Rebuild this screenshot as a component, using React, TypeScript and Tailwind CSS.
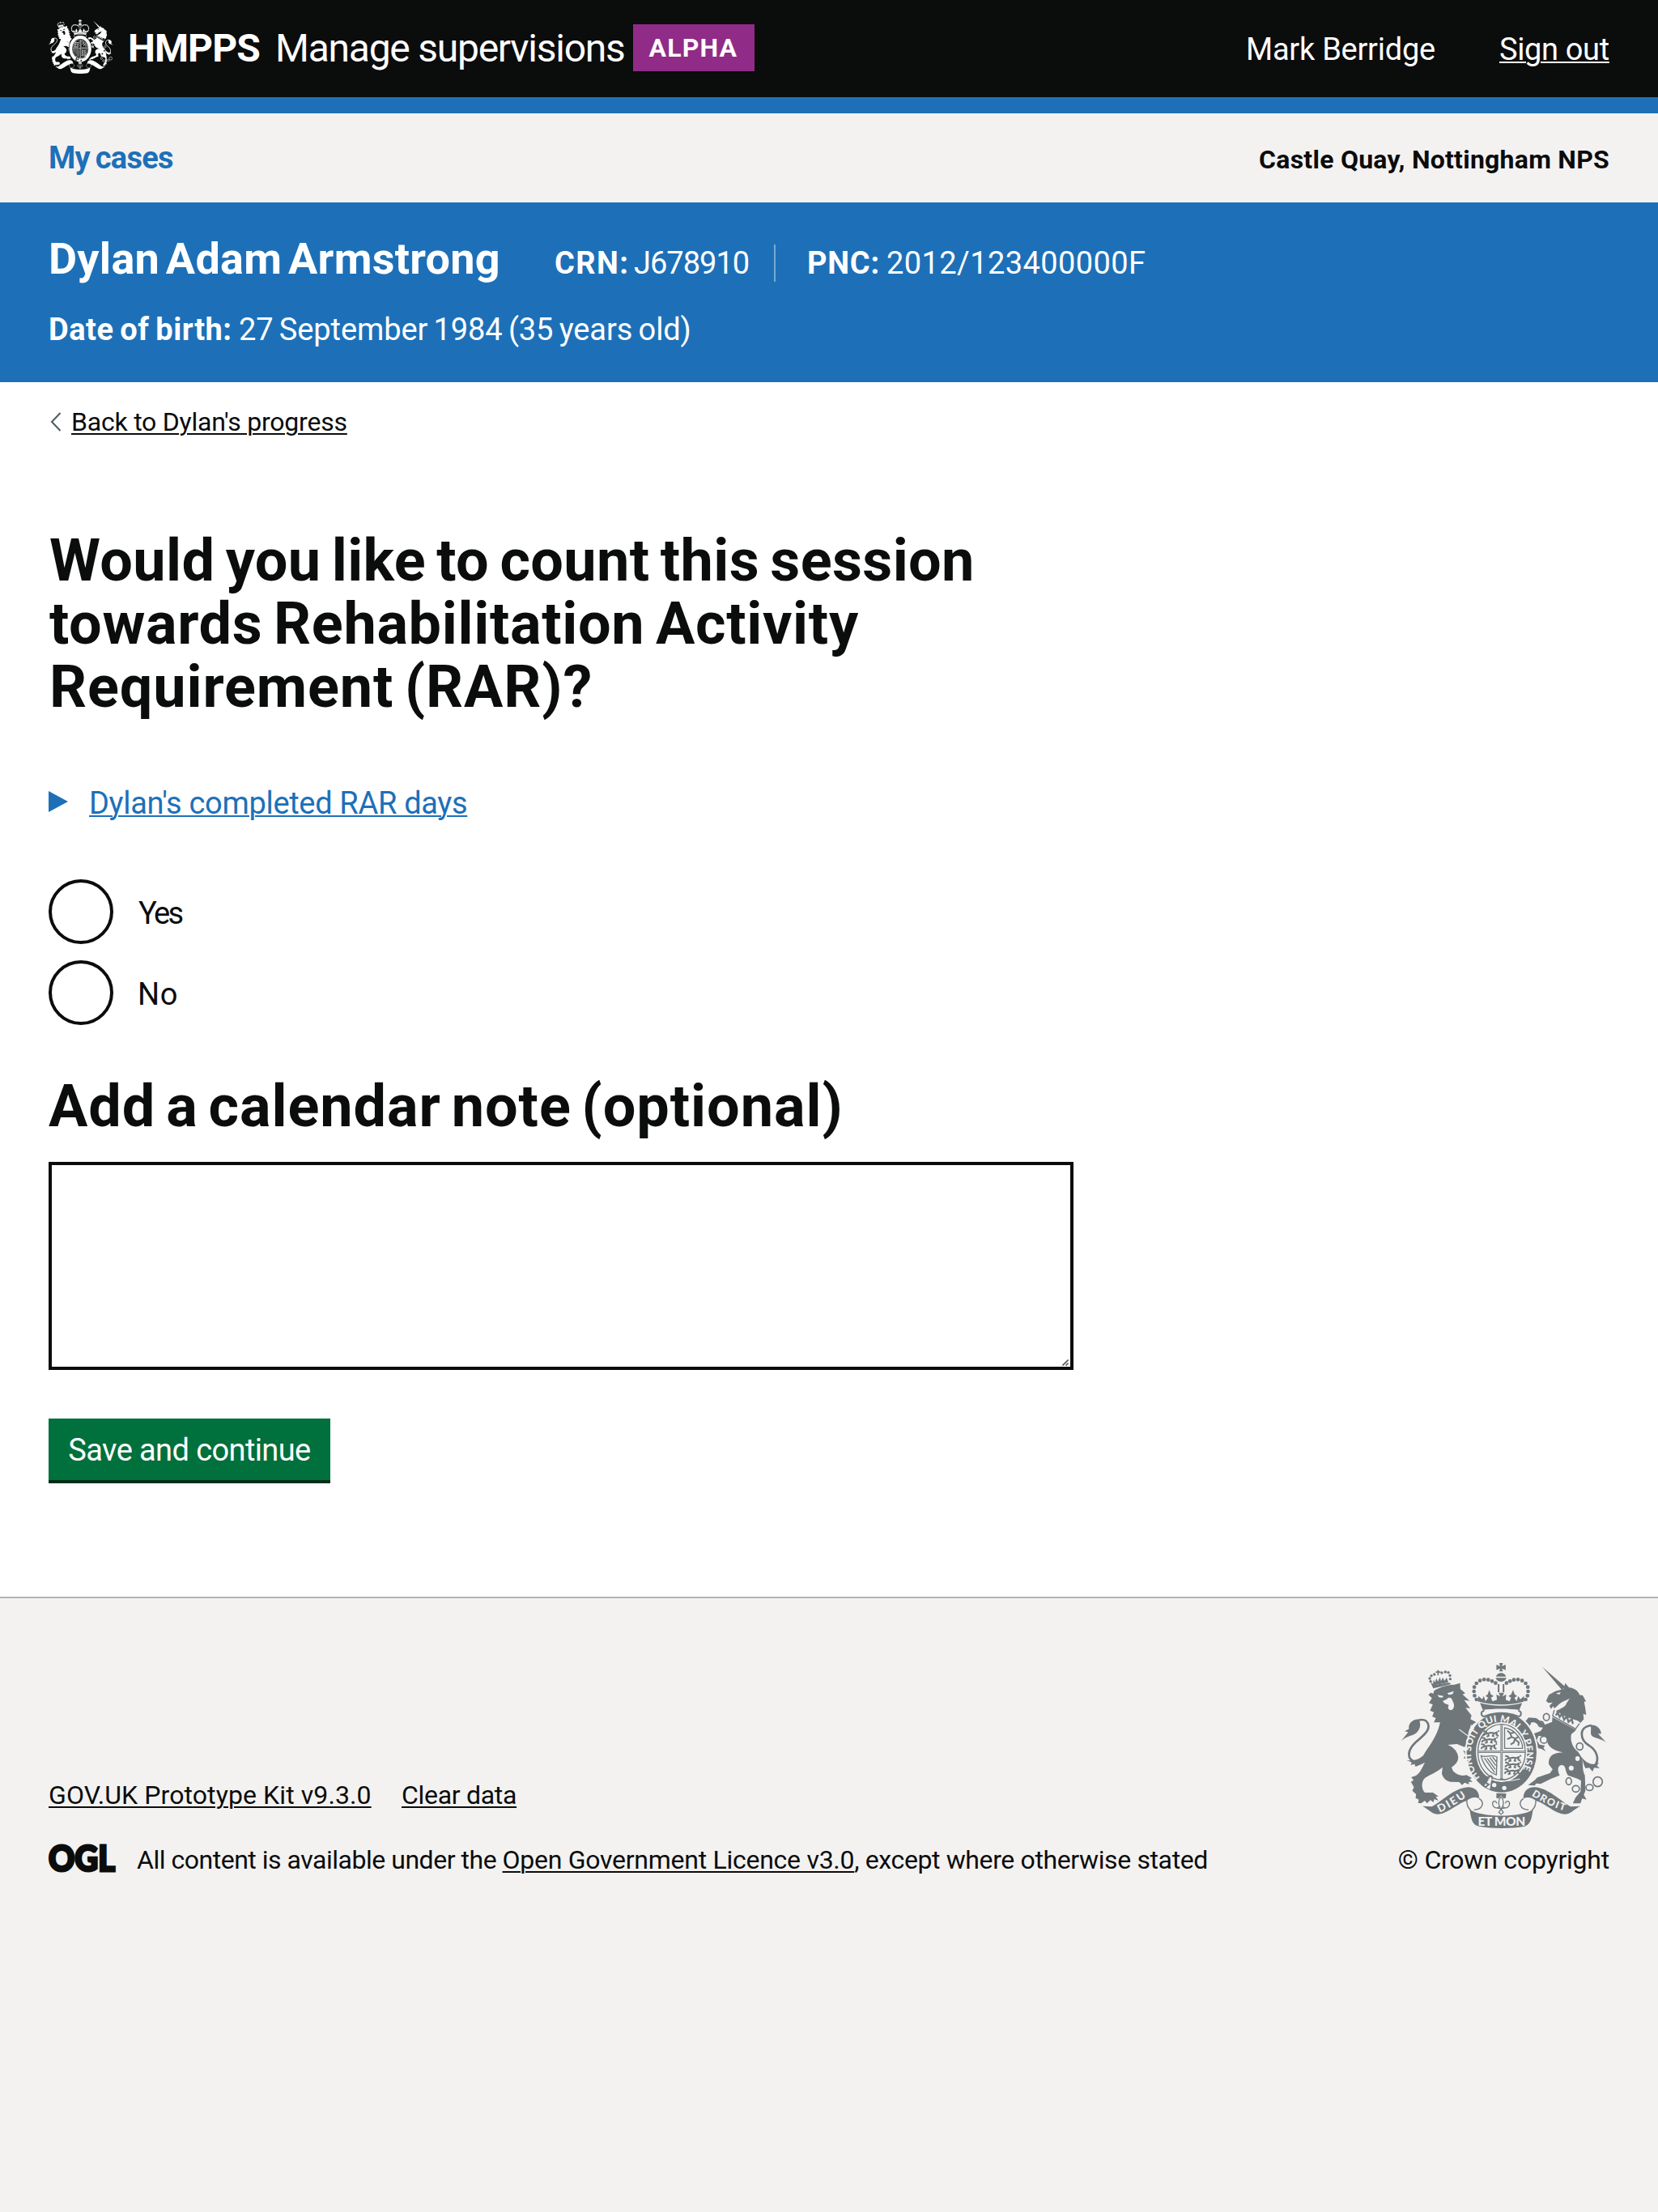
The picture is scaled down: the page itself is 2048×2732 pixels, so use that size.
import React from "react";

type CrestProps = { className: string; ink: string; paper: string; lettering?: boolean };

const CROWN_BEADS: [number, number][] = [
  [371, 207], [364, 193], [362, 177], [363, 161], [371, 147], [384, 137], [399, 133], [414, 134], [428, 139], [441, 146],
];

const CHAIN: [number, number, number, number][] = [
  [627, 272, 11, 13], [607, 298, 10, 10], [618, 356, 13, 13], [749, 381, 12, 13],
  [709, 510, 10, 13], [735, 538, 13, 12], [785, 533, 13, 11], [815, 512, 17, 18],
];

function Passant({ x, y, ink }: { x: number; y: number; ink: string }) {
  return (
    <g transform={`translate(${x} ${y})`} stroke={ink} strokeWidth="6" fill="none" strokeLinejoin="round">
      <path d="M2 2 L12 4 L16 11 L30 8 L44 10 L52 6 L50 16 L58 20 M16 11 L6 14 L2 20 M20 12 L22 20 L14 22 M40 12 L36 20 L42 22 M56 4 L60 0" />
    </g>
  );
}

function Crest({ className, ink, paper, lettering }: CrestProps) {
  return (
    <svg className={className} viewBox="96 72 750 612" preserveAspectRatio="none" aria-hidden="true">
      {/* lion */}
      <g fill={ink}>
        <path d="M195 190 L203 182 L213 185 L216 174 C240 160 265 152 290 152 L311 146 L312 168 L330 184 L320 188 L346 212 L326 209 L348 240 L331 238 L353 266 L349 280 L370 291 C352 300 342 318 340 340 L352 362 L368 395 L373 420 L362 426 L350 420 L344 430 L336 422 L324 427 L330 412 L322 395 L337 402 L330 385 L300 372 L266 375 C290 385 306 405 304 425 C302 442 290 450 280 458 L285 472 C300 488 318 492 334 487 L355 498 L346 502 L356 512 L342 512 L344 522 L328 515 L318 524 L308 513 L275 512 C258 508 248 495 244 482 L247 458 C225 478 195 488 180 500 C168 515 170 540 182 552 L212 552 L232 566 L222 568 L232 582 L216 576 L214 588 L202 580 L190 592 L182 582 L168 592 L157 590 L160 578 L148 572 L150 558 L136 545 L142 532 L131 512 L141 506 L132 495 L148 490 C165 480 172 460 182 440 C172 446 160 450 148 456 L144 446 L130 450 L134 440 L114 431 C140 436 160 430 176 415 C192 385 226 350 238 292 L215 292 L222 276 L209 270 L215 254 L201 248 L211 226 L197 220 L208 202 Z" />
        <path d="M160 281 C135 278 120 300 124 316 L108 325 L121 328 L96 360 C120 340 142 342 154 328 C166 314 168 296 160 281 Z" />
        <path d="M203 145 L222 152 L272 145 L278 150 L213 166 Z" />
        <path d="M222 103 h6 v-5 h5 v5 h6 v5 h-6 v10 h-5 v-10 h-6 Z" />
        {[[203, 140], [200, 129], [206, 119], [217, 114], [244, 108], [257, 105], [268, 107], [274, 118], [275, 131]].map(([x, y]) => (
          <circle key={`${x}-${y}`} cx={x} cy={y} r="5" />
        ))}
        <path d="M212 148 L214 134 L220 143 L224 128 L230 141 L237 124 L241 139 L248 126 L254 138 L262 126 L268 144 L216 154 Z" />
      </g>
      <path d="M152 440 C112 430 118 395 148 366 C178 340 202 320 194 298 C188 282 172 280 158 284" fill="none" stroke={ink} strokeWidth="8" />
      <g fill={paper}>
        <path d="M228 190 L250 194 L246 200 L234 199 Z M264 184 L288 176 L284 187 L270 190 Z" />
        <path d="M262 206 C270 196 282 200 284 214 C292 226 290 242 280 246 C268 248 264 236 270 228 C262 222 252 224 248 212 Z" />
      </g>
      <path d="M308 318 L345 346 M352 300 L346 330" stroke={paper} strokeWidth="3" fill="none" />

      {/* unicorn */}
      <g fill={ink}>
        <path d="M612 86 L696 160 L684 172 Z" />
        <path d="M626 212 L636 190 L660 176 L690 168 L696 146 L710 163 C732 164 748 182 748 190 L760 192 L772 214 L765 216 L769 236 L773 264 L762 260 L764 280 L752 294 L742 286 L700 272 L662 250 C678 242 700 232 700 222 L712 204 L690 214 C676 220 668 232 656 240 L652 232 L644 242 L638 230 L650 218 L634 220 Z" />
        <path d="M649 272 L736 320 L718 336 C714 360 722 385 744 402 L758 425 C762 450 758 470 768 488 L770 545 L764 560 L774 578 L758 574 L752 592 L724 592 L734 570 L752 548 L754 508 L740 500 L706 488 C694 470 700 452 685 450 C665 450 668 474 676 488 L645 500 L606 520 L590 518 L584 526 L560 524 L584 506 L594 496 L640 480 L650 466 L636 448 C632 416 655 402 690 404 C665 398 640 390 632 370 L626 345 L598 342 L592 358 L602 374 L622 378 L616 386 L625 399 L608 390 L592 386 L586 362 L568 344 L574 336 L606 324 L614 312 L584 292 L572 292 L566 306 L550 288 L562 274 L590 276 L622 300 L648 290 Z" />
        <path d="M788 302 C806 298 826 312 828 334 L816 334 L846 366 C826 350 800 352 792 340 C786 328 794 314 788 302 Z" />
        <path d="M756 420 C776 448 800 452 820 440 L812 452 L822 462 L802 460 L796 474 L784 460 L770 462 L764 448 Z" />
      </g>
      <path d="M802 456 C824 430 812 396 784 378 C748 356 744 308 792 303" fill="none" stroke={ink} strokeWidth="8" />
      <path d="M662 184 l18 -4 l-6 9 z" fill={paper} />
      <g fill="none" stroke={ink} strokeWidth="4">
        <path d="M656 246 L650 268 L734 316 L748 296" />
        <path d="M662 266 l6 -12 l8 18 l8 -12 l8 22 l10 -12 l6 20 l12 -10 l4 18" strokeWidth="7" />
        {CHAIN.map(([x, y, rx, ry]) => (
          <ellipse key={`${x}-${y}`} cx={x} cy={y} rx={rx} ry={ry} strokeWidth="5" />
        ))}
      </g>
      <ellipse cx="741" cy="426" rx="8" ry="9" fill={paper} />
      <ellipse cx="718" cy="461" rx="9" ry="9" fill={paper} />

      {/* crown */}
      <g fill={ink}>
        <path d="M444 78 L458 84 L454 72 L468 72 L464 84 L478 78 L478 98 L464 92 L468 103 L454 103 L458 92 L444 98 Z" />
        <path d="M443 122 C446 104 476 104 479 122 Z M441 127 L481 127 C476 146 446 146 441 127 Z" />
        {CROWN_BEADS.map(([x, y]) => (
          <g key={`${x}-${y}`}>
            <circle cx={x} cy={y} r="7" />
            <circle cx={922 - x} cy={y} r="7" />
          </g>
        ))}
        <path d="M449 150 h6 v30 h-6 Z M467 150 h6 v30 h-6 Z" />
        <path d="M384 220 C430 234 492 234 538 220 L528 246 C490 240 432 240 394 246 Z" />
        <path d="M376 214 L378 194 L392 206 L398 194 L404 214 L414 200 L404 194 L412 188 L418 172 L424 188 L434 194 L424 200 L430 214 L446 208 L444 188 L458 196 L452 182 L472 182 L466 196 L480 188 L478 208 L492 214 L498 200 L488 194 L498 188 L505 172 L511 188 L520 194 L510 200 L518 214 L524 194 L532 206 L545 194 L546 214 C500 230 425 230 376 214 Z" />
      </g>

      {/* garter and shield */}
      <ellipse cx="463" cy="403" rx="134" ry="154" fill={paper} />
      <path d="M400 248 C382 250 388 276 404 268 C440 254 482 254 520 268 C536 276 540 250 524 248" fill="none" stroke={ink} strokeWidth="6" />
      <ellipse cx="463" cy="403" rx="128" ry="148" fill={ink} />
      <ellipse cx="463" cy="402" rx="94" ry="111" fill={paper} />
      <ellipse cx="463" cy="402" rx="87" ry="103" fill="none" stroke={ink} strokeWidth="4" />
      <path d="M463 300 V504 M376 401 H550" stroke={ink} strokeWidth="8" />
      <path d="M463 300 V504 M376 401 H550" stroke={paper} strokeWidth="2" />
      <Passant x={394} y={322} ink={ink} />
      <Passant x={388} y={346} ink={ink} />
      <Passant x={386} y={370} ink={ink} />
      <Passant x={474} y={414} ink={ink} />
      <Passant x={474} y={438} ink={ink} />
      <Passant x={472} y={462} ink={ink} />
      <path d="M474 312 V388 H540 C540 360 515 318 474 312 Z" fill="none" stroke={ink} strokeWidth="4" />
      <path d="M484 322 L494 332 L500 346 L484 354 M500 346 L514 352 L526 344 M512 352 L508 366 L496 374 M514 356 L526 366 L524 378 M494 332 L508 330" fill="none" stroke={ink} strokeWidth="6" />
      <path d="M388 416 C410 424 430 408 446 420 L444 486 C420 480 396 450 388 416 Z M400 424 L438 478 M410 424 L440 466 M420 422 L442 452 M430 420 L444 438" fill="none" stroke={ink} strokeWidth="4" />
      <path d="M448 506 L463 498 L480 506 Z" fill={ink} />
      <path d="M398 528 L428 488 L420 540 Z" fill={paper} />
      <path d="M392 500 L400 492 L414 496 L424 488 M414 496 C402 506 404 518 416 522 L404 532 L390 522 M424 490 C436 496 424 510 428 524" fill="none" stroke={ink} strokeWidth="6" />
      <path d="M414 502 C450 510 490 512 530 502" fill="none" stroke={paper} strokeWidth="3" />
      <circle cx="436" cy="524" r="8" fill={paper} />
      <circle cx="473" cy="535" r="8" fill={paper} />

      {/* ribbon */}
      <g fill={ink}>
        <path d="M172 602 L208 604 C250 580 290 535 340 532 C368 532 382 550 381 574 C366 566 350 570 336 582 C300 592 270 628 232 632 C208 633 195 612 172 602 Z" />
        <path d="M752 602 L716 604 C674 580 634 535 584 532 C556 532 542 550 543 574 C558 566 574 570 588 582 C624 592 654 628 692 632 C716 633 729 612 752 602 Z" />
        <path d="M346 614 C352 650 354 670 380 677 C430 686 500 686 548 677 C572 668 574 640 578 614 C540 645 385 645 346 614 Z" />
        <path d="M444 554 L480 556 L478 572 L470 574 L461 562 L452 574 L444 572 Z" />
      </g>
      <g fill="none" stroke={ink} strokeWidth="4">
        <path d="M336 582 C334 600 342 610 350 618 M381 574 C402 588 394 616 362 616" />
        <path d="M588 582 C590 600 582 610 574 618 M543 574 C522 588 530 616 562 616" />
        <path d="M461 566 C448 582 452 600 458 608 M461 566 C474 582 470 600 464 608 M454 604 C448 612 430 610 430 592 C430 580 446 582 444 592 M468 604 C474 612 492 610 492 592 C492 580 476 582 478 592 M448 610 H474 M461 612 L453 626 L461 632 L469 626 Z" />
      </g>

      {lettering && (
        <g fill={paper} fontFamily="Lato, sans-serif" fontWeight="900">
          <path id="crest-dieu" d="M236 626 Q 285 604 345 560" fill="none" />
          <path id="crest-droit" d="M572 562 Q 640 606 702 622" fill="none" />
          <path id="crest-garter" d="M384 497 A 101 119 0 1 1 510 507" fill="none" />
          <text fontSize="40"><textPath href="#crest-dieu" textLength="114">DIEU</textPath></text>
          <text fontSize="37"><textPath href="#crest-droit" textLength="134">DROIT</textPath></text>
          <text x="463" y="675" fontSize="46" textAnchor="middle" textLength="174">ET MON</text>
          <text fontSize="35"><textPath href="#crest-garter" textLength="500">HONI SOIT QUI MAL Y PENSE</textPath></text>
        </g>
      )}
    </svg>
  );
}

const link = "underline decoration-2 underline-offset-[3px]";

export default function App() {
  return (
    <div className="flex min-h-[2732px] w-full flex-col bg-white font-['Roboto',sans-serif] text-[#0b0c0c]">
      <header className="flex h-[140px] items-start justify-between border-b-[20px] border-[#1d70b8] bg-[#0b0c0c] px-[60px] text-white">
        <div className="flex items-start whitespace-nowrap">
          <Crest className="mt-6 h-[67px] w-[80px]" ink="#ffffff" paper="#0b0c0c" />
          <span className="mt-[30px] ml-[18px] w-[182px] text-[48px]/[60px] font-bold tracking-[-0.9px]">HMPPS</span>
          <span className="mt-[30px] w-[442px] text-[48px]/[60px] tracking-[-1.25px]">Manage supervisions</span>
          <span className="mt-[30px] h-[58px] w-[150px] bg-[#912b88] pl-[19.5px] text-[32px]/[58px] font-bold tracking-[1.2px]">ALPHA</span>
        </div>
        <div className="mt-9 flex text-[38px]/[50px] whitespace-nowrap">
          <span className="w-[313px] tracking-[-0.25px]">Mark Berridge</span>
          <a className="w-[136px] tracking-[-0.35px] underline decoration-2 underline-offset-2">Sign out</a>
        </div>
      </header>

      <nav className="flex h-[110px] items-start justify-between bg-[#f3f2f1] px-[60px] font-bold">
        <a className="mt-[30px] text-[38px]/[50px] tracking-[-0.7px] [word-spacing:-2px] text-[#1d70b8]">My cases</a>
        <span className="mt-[37px] text-[32px]/[40px] tracking-[0.25px]">Castle Quay, Nottingham NPS</span>
      </nav>

      <section className="h-[222px] bg-[#1d70b8] px-[60px] pt-[35px] whitespace-nowrap text-white">
        <div className="flex h-[79px] items-baseline text-[38px]/[50px]">
          <h2 className="w-[625px] text-[54px]/[70px] font-bold tracking-[0.28px] [word-spacing:-6px]">Dylan Adam Armstrong</h2>
          <span className="w-[98px] font-bold tracking-[1.43px]">CRN:</span>
          <span className="w-[173px] tracking-[-1px]">J678910</span>
          <span className="mt-[17px] h-[46px] w-[41px] self-start border-l-2 border-[#77a9d4]" />
          <span className="w-[98px] font-bold tracking-[0.78px]">PNC:</span>
          <span className="tracking-[0.41px]">2012/123400000F</span>
        </div>
        <div className="mt-[18px] flex text-[38px]/[50px]">
          <span className="w-[235px] font-bold tracking-[0.5px] [word-spacing:-2px]">Date of birth:</span>
          <span className="tracking-[-0.1px] [word-spacing:-2px]">27 September 1984 (35 years old)</span>
        </div>
      </section>

      <main className="px-[60px] pt-[29px]">
        <div className="flex h-10 items-center">
          <svg className="h-6 w-7" viewBox="0 0 28 24" fill="none" stroke="#505a5f" strokeWidth="2" aria-hidden="true">
            <path d="M14.5 1 L4 12 L14.5 23" />
          </svg>
          <a className="text-[32px]/[40px] tracking-[-0.22px] underline decoration-2 underline-offset-[3px]">Back to Dylan's progress</a>
        </div>

        <h1 className="mt-[113px] flex flex-col pl-[1px] text-[72px]/[78px] font-bold whitespace-nowrap [word-spacing:-5px]">
          <span className="tracking-[0.38px]">Would you like to count this session</span>
          <span className="tracking-[0.68px]">towards Rehabilitation Activity</span>
          <span className="tracking-[0.88px]">Requirement (RAR)?</span>
        </h1>

        <div className="mt-[78px] flex h-[50px] items-center text-[38px]/[50px] text-[#1d70b8]">
          <svg className="mt-[-2px] h-[26px] w-[50px]" viewBox="0 0 50 26" fill="#1d70b8" aria-hidden="true">
            <path d="M0 0 L24 13 L0 26 Z" />
          </svg>
          <a className="pt-[1px] tracking-[-0.32px] underline decoration-2 underline-offset-2">Dylan's completed RAR days</a>
        </div>

        <div className="mt-[70px] flex flex-col gap-5 text-[38px]/[50px]">
          <label className="flex h-20 items-center gap-[31px]">
            <span className="size-20 rounded-full border-4 border-[#0b0c0c]" />
            <span className="pt-[3px] tracking-[-2.6px]">Yes</span>
          </label>
          <label className="flex h-20 items-center gap-[30px]">
            <span className="size-20 rounded-full border-4 border-[#0b0c0c]" />
            <span className="pt-[3px] tracking-[0.6px]">No</span>
          </label>
        </div>

        <h2 className="mt-[62px] text-[72px]/[78px] font-bold tracking-[0.95px] whitespace-nowrap [word-spacing:-6px]">Add a calendar note (optional)</h2>
        <div className="relative mt-[29px] h-[257px] w-[1266px]">
          <textarea className="block h-full w-full resize-none rounded-none border-4 border-[#0b0c0c] bg-white p-2.5 outline-none" />
          <svg className="absolute right-[6px] bottom-[5px] h-2 w-2" viewBox="0 0 8 8" stroke="#555555" strokeWidth="1.6" aria-hidden="true">
            <path d="M0.5 7.5 L7.5 0.5 M4.5 7.5 L7.5 4.5" />
          </svg>
        </div>

        <button className="mt-[60px] block h-[76px] w-[348px] bg-[#00703c] pt-[2px] text-center text-[38px]/[74px] tracking-[-0.6px] whitespace-nowrap text-white shadow-[0_4px_0_#002d18]">Save and continue</button>
      </main>

      <footer className="mt-[144px] flex grow items-start justify-between border-t-2 border-[#b1b4b6] bg-[#f3f2f1] px-[60px] text-[32px]/[40px] whitespace-nowrap">
        <div className="mt-[223px]">
          <div className="flex">
            <a className="w-[436px]"><span className={link + " tracking-[0.1px]"}>GOV.UK Prototype Kit v9.3.0</span></a>
            <a className={link + " tracking-[-0.3px]"}>Clear data</a>
          </div>
          <div className="mt-10 flex">
            <svg className="mt-[1px] h-[36px] w-[109px] overflow-visible" viewBox="0 0 109 36" aria-label="OGL">
              <text x="0" y="32.5" fontFamily="Lato, sans-serif" fontWeight="900" fontSize="43" textLength="82" lengthAdjust="spacingAndGlyphs" fill="#0b0c0c" stroke="#0b0c0c" strokeWidth="3">OGL</text>
            </svg>
            <p>
              <span className="tracking-[-0.48px]">All content is available under the </span>
              <a className={link + " tracking-[-0.27px]"}>Open Government Licence v3.0</a>
              <span className="tracking-[-0.38px]">, except where otherwise stated</span>
            </p>
          </div>
        </div>
        <div className="mt-20 flex flex-col items-end">
          <Crest className="mr-[4px] h-[204px] w-[253px]" ink="#6f777b" paper="#f3f2f1" lettering />
          <span className="mt-[19px] tracking-[-0.22px]">© Crown copyright</span>
        </div>
      </footer>
    </div>
  );
}
